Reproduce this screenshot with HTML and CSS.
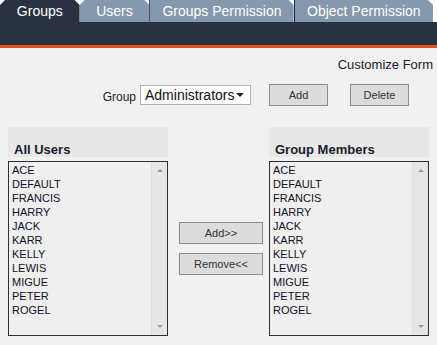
FILE: index.html
```html
<!DOCTYPE html>
<html lang="en">
<head>
    <meta charset="UTF-8">
    <title>Groups</title>
    <link rel="stylesheet" href="styles.css">
</head>
<body>

    <div class="tabs">
        <a class="tab active" href="#">Groups</a>
        <a class="tab" href="#">Users</a>
        <a class="tab sep" href="#">Groups Permission</a>
        <a class="tab sep" href="#">Object Permission</a>
    </div>
    <div class="topbar"></div>

    <div class="customize">Customize Form</div>

    <div class="group-row">
        <label class="group-label">Group</label>
        <div class="select">
            <span>Administrators</span>
            <span class="caret"></span>
        </div>
        <button class="btn btn-add">Add</button>
        <button class="btn btn-delete">Delete</button>
    </div>

    <div class="panels">
        <div class="panel">
            <h3 class="panel-title">All Users</h3>
            <div class="listbox" id="all-users"></div>
        </div>
        <div class="move-buttons">
            <button class="btn btn-move">Add&gt;&gt;</button>
            <button class="btn btn-move">Remove&lt;&lt;</button>
        </div>
        <div class="panel">
            <h3 class="panel-title">Group Members</h3>
            <div class="listbox" id="group-members"></div>
        </div>
    </div>

    <script>
        const users = ["ACE", "DEFAULT", "FRANCIS", "HARRY", "JACK", "KARR", "KELLY", "LEWIS", "MIGUE", "PETER", "ROGEL"];

        ["all-users", "group-members"].forEach(id => {
            const box = document.getElementById(id);
            let html = '<div class="items">';
            users.forEach(u => {
                html += `<div class="item">${u}</div>`;
            });
            html += '</div><div class="scrollbar"><span class="up"></span><span class="down"></span></div>';
            box.innerHTML = html;
        });
    </script>
</body>
</html>
```

FILE: styles.css
```css
body {
    font-family: "Liberation Sans", Arial, sans-serif;
    background: #f1f1f1;
    margin: 0;
    color: #1a1a2a;
}

/* Tabs */
.tabs {
    display: flex;
    height: 22px;
    background: #ffffff;
    padding-right: 4px;
}

.tab {
    display: flex;
    align-items: center;
    justify-content: center;
    background: #8598ad;
    color: #ffffff;
    font-size: 14px;
    text-decoration: none;
    clip-path: polygon(5px 0, calc(100% - 5px) 0, 100% 5px, 100% 100%, 0 100%, 0 5px);
}

.tab:nth-child(1) { width: 80px; }
.tab:nth-child(2) { width: 70px; }
.tab:nth-child(3) { width: 144px; }
.tab:nth-child(4) { width: 139px; }

.tab.active {
    background: #2a3242;
}

.tab.sep {
    border-left: 1px solid #1e2530;
    clip-path: polygon(0 0, 1px 0, 1px 0, 5px 0, calc(100% - 5px) 0, 100% 5px, 100% 100%, 0 100%);
}

.topbar {
    height: 23px;
    background: #2a3141;
    border-bottom: 3px solid #e9512b;
}

/* Customize */
.customize {
    text-align: right;
    font-size: 13px;
    padding: 9px 4px 0 0;
    height: 21px;
}

/* Group row */
.group-row {
    display: flex;
    justify-content: flex-end;
    align-items: center;
    padding-right: 28px;
    margin-top: 6px;
    height: 22px;
}

.group-label {
    font-size: 12px;
    margin-right: 4px;
    margin-top: 4px;
}

.select {
    width: 109px;
    height: 20px;
    background: #ffffff;
    border: 1px solid #b4b4b4;
    display: flex;
    align-items: center;
    justify-content: space-between;
    padding: 0 6px 0 4px;
    box-sizing: border-box;
    width: 111px;
    font-size: 14px;
    color: #111;
}

.caret {
    width: 0;
    height: 0;
    border-left: 4px solid transparent;
    border-right: 4px solid transparent;
    border-top: 4px solid #222;
}

.btn {
    font-family: "Liberation Sans", Arial, sans-serif;
    font-size: 11px;
    color: #333;
    background: #dcdcdc;
    border: 1px solid #8c8c8c;
    padding: 0;
    cursor: pointer;
}

.btn-add {
    width: 59px;
    height: 22px;
    margin-left: 18px;
}

.btn-delete {
    width: 59px;
    height: 22px;
    margin-left: 22px;
}

/* Panels */
.panels {
    display: flex;
    padding: 21px 0 0 8px;
}

.panel {
    width: 160px;
}

.panel-title {
    margin: 0 0 4px 0;
    height: 30px;
    background: #e8e8e8;
    font-size: 13px;
    font-weight: bold;
    color: #1c1c2c;
    padding: 15px 0 0 6px;
    box-sizing: border-box;
}

.listbox {
    display: flex;
    height: 175px;
    border: 1px solid #2e2e3a;
    background: #efefef;
    box-sizing: border-box;
}

.items {
    flex: 1;
    padding: 1px 0 0 3px;
}

.item {
    font-size: 11px;
    line-height: 14px;
    color: #10102a;
}

.scrollbar {
    width: 15px;
    background: #e6e6e6;
    border-left: 1px solid #dedede;
    display: flex;
    flex-direction: column;
    justify-content: space-between;
    align-items: center;
    padding: 7px 0 7px 0;
}

.up, .down {
    width: 0;
    height: 0;
    border-left: 3px solid transparent;
    border-right: 3px solid transparent;
}

.up { border-bottom: 3px solid #999; }
.down { border-top: 3px solid #999; }

.move-buttons {
    display: flex;
    flex-direction: column;
    gap: 9px;
    padding: 95px 6px 0 11px;
}

.btn-move {
    width: 84px;
    height: 22px;
}
```
